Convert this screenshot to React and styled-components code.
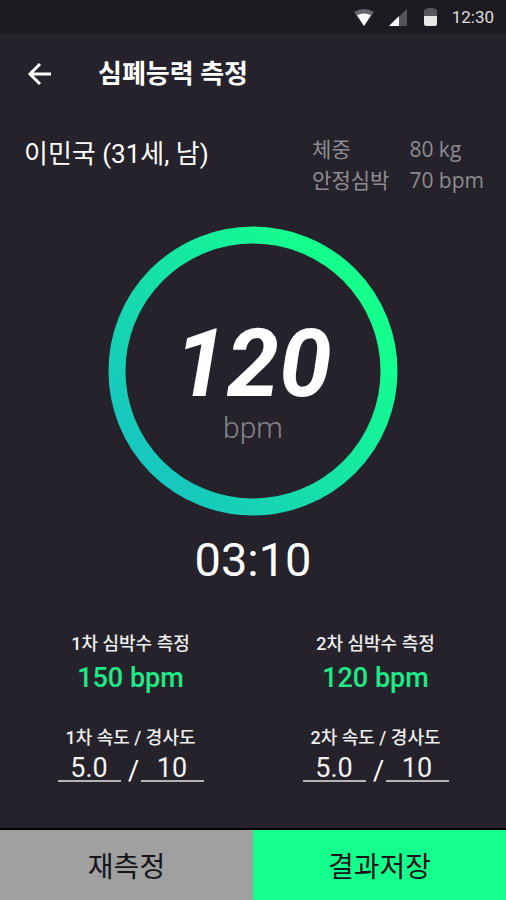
import React, { useState } from "react";
import styled, { createGlobalStyle } from "styled-components";

const GlobalStyle = createGlobalStyle`
  * {
    box-sizing: border-box;
  }
  body {
    margin: 0;
    background: #25222b;
    color: #ffffff;
    font-family: Roboto, "Noto Sans CJK KR", sans-serif;
  }
  button,
  input {
    font-family: inherit;
  }
`;

const Screen = styled.div`
  min-height: 100vh;
  display: flex;
  flex-direction: column;
`;

const StatusBar = styled.div`
  height: 34px;
  padding: 0 12px;
  display: flex;
  align-items: center;
  justify-content: flex-end;
  background: #1d1a22;
  color: #dedede;
  font-size: 17px;
  line-height: 34px;
`;

const StatusIcons = styled.svg`
  width: 84px;
  height: 20px;
  margin-right: 14px;
`;

const Header = styled.header`
  height: 80px;
  padding: 0 24px;
  display: flex;
  align-items: center;
  gap: 44px;
  h1 {
    margin: 0;
    font-size: 26px;
    line-height: 40px;
    font-weight: 700;
  }
`;

const BackButton = styled.button`
  width: 30px;
  height: 30px;
  padding: 0;
  border: none;
  background: none;
  color: #ffffff;
  cursor: pointer;

  svg {
    display: block;
  }
`;

const Profile = styled.section`
  padding: 20px 22px 0 24px;
  display: flex;
  justify-content: space-between;
  h2 {
    margin: 0;
    font-size: 26px;
    line-height: 40px;
    font-weight: 400;
  }
`;

const BodyInfo = styled.dl`
  margin: 0;
  display: grid;
  grid-template-columns: auto auto;
  column-gap: 20px;
  color: #8e8c92;
  font-family: "Open Sans", "Noto Sans CJK KR", sans-serif;
  font-size: 21px;
  line-height: 31px;
  dd {
    margin: 0;
  }
`;

const Gauge = styled.section`
  margin-top: 30px;
  display: grid;
  place-items: center;

  > * {
    grid-area: 1 / 1;
  }
`;

const Ring = styled.svg`
  width: 290px;
  height: 290px;
`;

const Bpm = styled.div`
  padding-top: 18px;
  text-align: center;
  strong {
    display: block;
    font-size: 94px;
    line-height: 96px;
    font-style: italic;
    font-weight: 700;
  }
  span {
    display: block;
    color: #85838a;
    font-size: 30px;
    line-height: 32px;
    font-weight: 300;
  }
`;

const Timer = styled.div`
  margin-top: 16px;
  font-size: 47px;
  line-height: 56px;
  text-align: center;
`;

const Results = styled.section`
  flex: 1;
  padding: 42px 8px 40px;
  display: grid;
  grid-template-columns: 1fr 1fr;
  align-content: start;
`;

const Result = styled.div`
  display: flex;
  flex-direction: column;
  align-items: center;
`;

const Label = styled.div`
  color: #eeeeee;
  font-size: 18px;
  line-height: 28px;
  font-weight: 500;
`;

const Value = styled.div`
  margin-bottom: 26px;
  color: #1eea86;
  font-size: 27px;
  line-height: 40px;
  font-weight: 500;
`;

const Fields = styled.div`
  display: flex;
  font-size: 27px;
  line-height: 30px;
  span {
    width: 20px;
    padding: 4px 0 0 6px;
    text-align: center;
  }
`;

const NumberInput = styled.input`
  width: 63px;
  height: 30px;
  padding: 4px 0 0;
  border: none;
  border-bottom: 2px solid #b4b3b6;
  border-radius: 0;
  background: none;
  color: #f2f2f2;
  font-size: 27px;
  line-height: 24px;
  text-align: center;
  outline: none;

  &:focus {
    border-color: #14ff8c;
  }
`;

const Footer = styled.footer`
  display: grid;
  grid-template-columns: 1fr 1fr;
  border-top: 2px solid #000000;
`;

const FooterButton = styled.button`
  height: 70px;
  padding: 0;
  border: none;
  background: ${(props) => (props.$primary ? "#14ff8c" : "#a0a0a0")};
  color: #16151c;
  font-size: 28px;
  cursor: pointer;
`;

const measurements = [
  { round: "1차", bpm: 150, speed: "5.0", incline: "10" },
  { round: "2차", bpm: 120, speed: "5.0", incline: "10" },
];

function MeasureResult({ round, bpm, speed, incline }) {
  const [values, setValues] = useState({ speed, incline });

  const handleChange = (e) => {
    setValues({ ...values, [e.target.name]: e.target.value });
  };

  return (
    <Result>
      <Label>{round} 심박수 측정</Label>
      <Value>{bpm} bpm</Value>
      <Label>{round} 속도 / 경사도</Label>
      <Fields>
        <NumberInput
          name="speed"
          aria-label={`${round} 속도`}
          inputMode="decimal"
          value={values.speed}
          onChange={handleChange}
        />
        <span>/</span>
        <NumberInput
          name="incline"
          aria-label={`${round} 경사도`}
          inputMode="decimal"
          value={values.incline}
          onChange={handleChange}
        />
      </Fields>
    </Result>
  );
}

function App() {
  return (
    <Screen>
      <GlobalStyle />
      <StatusBar>
        <StatusIcons viewBox="0 0 84 20" aria-hidden="true">
          <path d="M0 5Q10 -1 20 5L10 19Z" fill="#67656b" />
          <path d="M3 8Q10 5 17 8L10 19Z" fill="#ffffff" />
          <path d="M53 2V19H35Z" fill="#57555c" />
          <path d="M45 9V19H35Z" fill="#ffffff" />
          <path d="M70 9V4q0-2 2-2l2-1h5l2 1q2 0 2 2v5Z" fill="#57555c" />
          <path d="M70 9h13v8q0 2-2 2h-9q-2 0-2-2Z" fill="#e8e8e8" />
        </StatusIcons>
        12:30
      </StatusBar>
      <Header>
        <BackButton aria-label="뒤로">
          <svg
            width="30"
            height="30"
            viewBox="0 0 30 30"
            fill="none"
            stroke="currentColor"
            strokeWidth="3"
          >
            <path d="M16 5L6 15L16 25M6 15H27" />
          </svg>
        </BackButton>
        <h1>심폐능력 측정</h1>
      </Header>
      <Profile>
        <h2>이민국 (31세, 남)</h2>
        <BodyInfo>
          <dt>체중</dt>
          <dd>80 kg</dd>
          <dt>안정심박</dt>
          <dd>70 bpm</dd>
        </BodyInfo>
      </Profile>
      <Gauge>
        <Ring viewBox="0 0 290 290" aria-hidden="true">
          <defs>
            <linearGradient id="ring" x1="0.1" y1="0.8" x2="0.85" y2="0.2">
              <stop offset="0" stopColor="#17c8be" />
              <stop offset="1" stopColor="#14ff8c" />
            </linearGradient>
          </defs>
          <circle
            cx="145"
            cy="145"
            r="136"
            fill="none"
            stroke="url(#ring)"
            strokeWidth="17"
          />
        </Ring>
        <Bpm>
          <strong>120</strong>
          <span>bpm</span>
        </Bpm>
      </Gauge>
      <Timer>03:10</Timer>
      <Results>
        {measurements.map((item) => (
          <MeasureResult key={item.round} {...item} />
        ))}
      </Results>
      <Footer>
        <FooterButton>재측정</FooterButton>
        <FooterButton $primary>결과저장</FooterButton>
      </Footer>
    </Screen>
  );
}

export default App;
